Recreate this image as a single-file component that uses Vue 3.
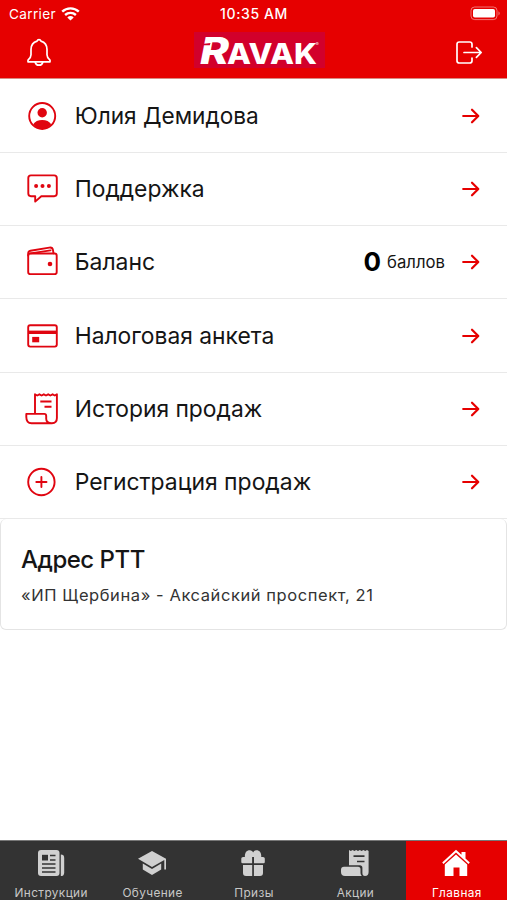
<script setup>
const rows = [
  { icon: 'user', label: 'Юлия Демидова', width: 184 },
  { icon: 'chat', label: 'Поддержка', width: 130 },
  { icon: 'wallet', label: 'Баланс', width: 80.5, points: 0 },
  { icon: 'card', label: 'Налоговая анкета', width: 199.5 },
  { icon: 'receipt', label: 'История продаж', width: 187.5 },
  { icon: 'plus', label: 'Регистрация продаж', width: 236.5 },
]
const tabs = [
  { icon: 'news', label: 'Инструкции' },
  { icon: 'cap', label: 'Обучение' },
  { icon: 'gift', label: 'Призы' },
  { icon: 'promo', label: 'Акции' },
  { icon: 'home', label: 'Главная', active: true },
]
</script>

<template>
  <div class="screen">
    <header class="header">
      <div class="status">
        <div class="carrier">
          <span>Carrier</span>
          <svg class="wifi" width="19" height="14" viewBox="0 0 19 14" fill="none" stroke="#fff" stroke-width="2.4">
            <path d="M1.2 4.7a12 12 0 0 1 16.6 0M4.1 8a8 8 0 0 1 10.8 0" />
            <path d="M6.3 10.4a4.8 4.8 0 0 1 6.4 0L9.5 13.6z" fill="#fff" stroke="none" />
          </svg>
        </div>
        <div class="time">10:35 AM</div>
        <div class="power">
          <svg width="31" height="15" viewBox="0 0 31 15">
            <rect x="1" y="1" width="26" height="12.6" rx="3.6" fill="none" stroke="#fff" stroke-opacity=".45" />
            <rect x="3" y="3" width="22" height="8.6" rx="1.8" fill="#fff" />
            <path d="M28.5 5.2q2.4 2.1 0 4.2z" fill="#fff" fill-opacity=".5" />
          </svg>
        </div>
      </div>
      <div class="bar">
        <svg class="bell" width="26" height="30" viewBox="0 0 26 30" fill="none" stroke="#fff" stroke-width="1.7" stroke-linejoin="round" stroke-linecap="round">
          <path d="M11.1 3.1a2 2 0 0 1 3.8 0c3.8 1.1 6.1 4.3 6.1 8.4v5.3c0 2.5 1 3.8 3 5.4v1.6H2v-1.6c2-1.6 3-2.9 3-5.4v-5.3c0-4.1 2.3-7.3 6.1-8.4z" />
          <path d="M9.2 24.2a3.9 3.9 0 0 0 7.6 0" />
        </svg>
        <div class="logo">
          <svg width="131" height="36" viewBox="0 0 131 36">
            <g class="brand" fill="#fff">
              <text x="6" y="31.5" font-size="37" font-style="italic" textLength="29" lengthAdjust="spacingAndGlyphs">R</text>
              <path d="M6 12.200 16.500 10.900 15.800 13.200 5 13.200z" fill="#d2002b" />
              <text x="33" y="31.5" font-size="29" textLength="90" lengthAdjust="spacingAndGlyphs">AVAK</text>
              <text x="121.5" y="14" font-size="5" opacity=".8">®</text>
            </g>
          </svg>
        </div>
        <svg class="exit" width="28" height="26" viewBox="0 0 28 26" fill="none" stroke="#fff" stroke-width="1.7" stroke-linejoin="round" stroke-linecap="round">
          <path d="M17 7V4.3Q17 2 14.7 2H4.3Q2 2 2 4.3v16.4Q2 23 4.3 23h10.4q2.3 0 2.3-2.3V18M9 12.5h17M21.4 7.7l4.8 4.8-4.8 4.8" />
        </svg>
      </div>
    </header>

    <main class="menu">
      <div v-for="r in rows" :key="r.icon" class="row">
        <svg class="icon" width="36" height="36" viewBox="0 0 36 36" fill="none" stroke="#e00510" stroke-width="1.9" stroke-linejoin="round" stroke-linecap="round">
          <g v-if="r.icon === 'user'">
            <circle cx="18.2" cy="18" r="13" />
            <circle cx="18.2" cy="14.8" r="4.7" fill="#e00510" stroke="none" />
            <path d="M9.2 26.2c1.7-2.7 5-4.2 9-4.2s7.3 1.5 9 4.2c-2.2 3-5.2 4.8-9 4.8s-6.8-1.8-9-4.8z" fill="#e00510" stroke="none" />
          </g>
          <g v-else-if="r.icon === 'chat'">
            <path d="M6.9 4.4h23.3q2.6 0 2.6 2.6v15.6q0 2.6-2.6 2.6H17.3L11.2 30.6V25.2H6.9q-2.6 0-2.6-2.6V7q0-2.6 2.6-2.6z" />
            <g fill="#e00510" stroke="none"><circle cx="12.1" cy="15" r="2" /><circle cx="18.5" cy="15" r="2" /><circle cx="24.9" cy="15" r="2" /></g>
          </g>
          <g v-else-if="r.icon === 'wallet'">
            <rect x="4.2" y="9.5" width="28.5" height="20.6" rx="2.2" />
            <path d="M4.2 11.5V9.5c0-1.7.7-2.4 2.3-2.7l18.8-3.2c2-.3 3.4.7 3.7 2.6l.5 3.2M6.5 9.4 26.5 6.4" />
            <circle cx="26" cy="20" r="2.3" fill="#e00510" stroke="none" />
          </g>
          <g v-else-if="r.icon === 'card'">
            <rect x="4.2" y="7.2" width="28.6" height="21.4" rx="2" />
            <path d="M4.2 14.3h28.6" stroke-width="3.4" stroke-linecap="butt" />
            <path d="M8.2 18.9h7v5.4h-7z" fill="#e00510" stroke="none" />
          </g>
          <g v-else-if="r.icon === 'receipt'">
            <path d="M11 22.3V3.3l2.2 1.2 2.2-1.2 2.2 1.2 2.2-1.2L22 4.5l2.2-1.2 2.2 1.2 2.2-1.2 2.2 1.2 2.1-1.2V27q0 5.2-5 5.2H7.5Q2.3 32.2 2.3 26V22.900h18q1.900 0 1.900 2.200v2.700q0 4.400 5.400 4.400" />
            <path d="M16.3 10.5h11.2M20.5 15.7h7" stroke-linecap="butt" stroke-width="2" />
          </g>
          <g v-else>
            <circle cx="17.4" cy="18" r="13.2" />
            <path d="M12.3 18h10.2M17.4 12.9v10.2" />
          </g>
        </svg>
        <svg class="label" :width="r.width + 10" height="36">
          <text x="-.3" y="26" :textLength="r.width" lengthAdjust="spacingAndGlyphs">{{ r.label }}</text>
        </svg>
        <div v-if="r.points !== undefined" class="points">
          <strong>{{ r.points }}</strong><span>баллов</span>
        </div>
        <svg class="arrow" width="18" height="18" viewBox="0 0 18 18" fill="none" stroke="#e60000" stroke-width="2.2" stroke-linecap="round" stroke-linejoin="round">
          <path d="M1.2 9h15M10 2.7 16.3 9 10 15.3" />
        </svg>
      </div>
    </main>

    <section class="card">
      <h2>Адрес РТТ</h2>
      <p>«ИП Щербина» - Аксайский проспект, 21</p>
    </section>

    <nav class="tabs">
      <div v-for="t in tabs" :key="t.icon" class="tab" :class="{ active: t.active }">
        <svg width="30" height="28" viewBox="0 0 30 28" fill="#d0d0d0">
          <g v-if="t.icon === 'news'">
            <rect x="2" y="1" width="21.5" height="26" rx="3" />
            <path d="M24.8 5.5q3.4 0 3.4 3.4v14.5q0 3.6-3.4 3.6z" />
            <path d="M6 5.8h6v5.7H6z" fill="#333" />
            <path d="M14 6.5h5.5M14 11h5.5M6 15h13.5M6 19h13.5M6 23h13.5" stroke="#333" stroke-width="1.5" />
          </g>
          <g v-else-if="t.icon === 'cap'">
            <path d="M15 2 29 9.8V20.5h-1.7V11L15 18 1 9.8z" />
            <path d="M5.8 14.5 15 20l9.2-5.5v6L15 26l-9.2-5.5z" />
          </g>
          <g v-else-if="t.icon === 'gift'">
            <path d="M3.3 13V9.5q0-1.5 1.8-1.5h1.8C6.5 3.5 9 1 11.8 1.2c1.8.1 2.7 1 3.3 2.2.6-1.2 1.5-2.1 3.3-2.2 2.8-.2 5.3 2.3 4.8 6.8H25q1.8 0 1.8 1.5V13q0 1.2-1.2 1.2H16V8h-1.9v6.2H4.5Q3.3 14.2 3.3 13z" />
            <path d="M5 16h9.2v11H8q-3 0-3-3zM15.9 16H25v8q0 3-3 3h-6.1z" />
          </g>
          <g v-else-if="t.icon === 'promo'">
            <path d="M9 16.3V1l1.8 1 1.8-1 1.8 1 1.8-1L18 2l1.8-1 1.8 1 1.8-1 1.8 1 1.8-1 1.6 1v21q0 4-3.6 4-2.6 0-2.6-3v-5.2q0-2.5-2.6-2.5z" />
            <path d="M1 20.8q0-3 3-3h14q2.5 0 2.5 2.5V24q0 1.7 1.3 3H5q-4 0-4-4z" />
            <path d="M13.5 7.2h11M17 12.5h7.5" stroke="#333" stroke-width="1.7" />
          </g>
          <g v-else fill="#fff">
            <path d="M15 .8 20.5 5.8V3h4v6.5l4.3 4-1.3 1.4L15 3.6 2.5 14.9l-1.3-1.4z" />
            <path d="M15 5.5 26.2 15.6V27h-7.7v-8.5h-6V27H3.800V15.6z" />
          </g>
        </svg>
        <span>{{ t.label }}</span>
      </div>
    </nav>
  </div>
</template>

<style>
body { background: #fff; }
</style>

<style scoped>
* { box-sizing: border-box; }
.screen {
  width: 507px;
  height: 900px;
  display: flex;
  flex-direction: column;
  overflow: hidden;
  background: #fff;
  font-family: Inter, Roboto, sans-serif;
  color: #151515;
}
.header { height: 79px; flex: none; background: #e60000; color: #fff; border-bottom: 1px solid #d98b83; }
.status { height: 28px; display: grid; grid-template-columns: 1fr auto 1fr; align-items: center; font-size: 13.6px; letter-spacing: .35px; }
.carrier { display: flex; align-items: center; gap: 5px; padding-left: 9px; }
.time { font-weight: 500; font-size: 14px; letter-spacing: .6px; padding: 0 0 2px 1px; }
.power { display: flex; justify-content: flex-end; padding: 0 6px 2px 0; }
.bar { display: grid; grid-template-columns: 1fr 131px 1fr; align-items: center; height: 50px; padding: 0 24px 0 26px; }
.bell { margin-bottom: 1px; }
.exit { justify-self: end; }
.logo { width: 131px; height: 36px; background: #d2002b; margin: 0 -5px 6px 5px; }
.logo svg { display: block; overflow: visible; }
.brand { font-family: Inter, sans-serif; font-weight: 800; }
.menu { height: 440px; flex: none; display: grid; grid-template-rows: 74px repeat(2, 73px) 74px repeat(2, 73px); }
.row { display: flex; align-items: center; padding: 0 27px 0 24px; border-bottom: 1px solid #e9e9e9; }
.row:nth-child(3n + 1) { padding-top: 1px; }
.row:not(:nth-child(3n + 1)) { padding-bottom: 1px; }
.icon { flex: none; margin-right: 15px; }
.label { font-size: 23.5px; fill: #151515; overflow: visible; }
.points { margin-left: auto; margin-right: 17px; display: flex; align-items: center; gap: 6px; font-size: 16.7px; }
.points strong { font-size: 26px; font-weight: 700; line-height: 30px; color: #000; }
.points span { line-height: 22px; }
.arrow { flex: none; margin-left: auto; }
.points + .arrow { margin-left: 0; }
.card { height: 111px; flex: none; padding: 25px 20px; border: 1px solid #e4e4e4; border-top: 0; border-radius: 6px; }
h2 { margin: 0; font-size: 24px; line-height: 32px; font-weight: 500; letter-spacing: -.5px; }
p { margin: 8px 0 0; font-size: 16.5px; line-height: 22px; letter-spacing: .58px; color: #333; white-space: nowrap; }
.tabs { margin-top: auto; height: 60px; display: grid; grid-template-columns: repeat(5, 1fr); background: #333; border-top: 1px solid #777; }
.tab { display: flex; flex-direction: column; align-items: center; padding-top: 8px; color: #c8c8c8; font-size: 11.8px; letter-spacing: .4px; }
.tab span { line-height: 14px; margin-top: 9px; white-space: nowrap; padding-left: 1px; }
.tab svg { flex: none; }
.tab.active { background: #e60000; color: #fff; }
</style>
